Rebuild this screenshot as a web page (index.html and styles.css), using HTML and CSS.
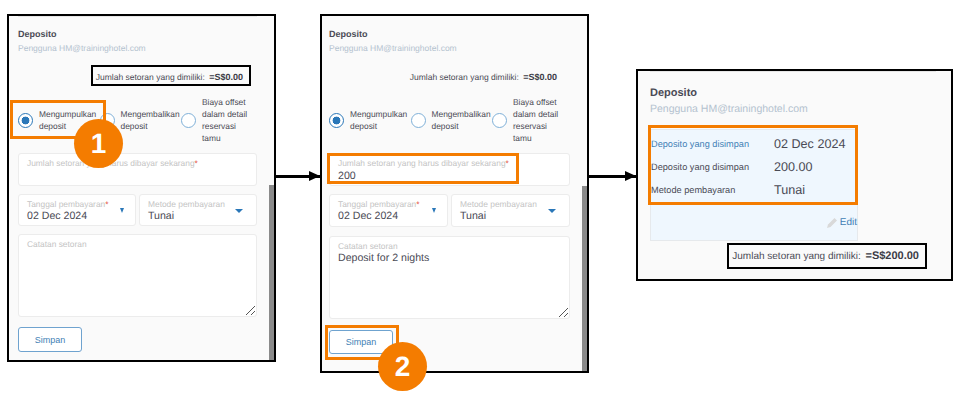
FILE: index.html
```html
<!DOCTYPE html>
<html lang="en">
<head>
    <meta charset="UTF-8">
    <title>Deposito</title>
    <link rel="stylesheet" href="styles.css">
</head>
<body>
    <div class="canvas">

        <!-- Step 1 -->
        <div class="panel panel-one">
            <h2>Deposito</h2>
            <p class="email">Pengguna HM@traininghotel.com</p>
            <p class="balance"><span>Jumlah setoran yang dimiliki:</span> <b>=S$0.00</b></p>

            <div class="radios">
                <div class="radio-item"><i class="radio checked"></i><span>Mengumpulkan deposit</span></div>
                <div class="radio-item"><i class="radio"></i><span>Mengembalikan deposit</span></div>
                <div class="radio-item"><i class="radio"></i><span class="narrow">Biaya offset dalam detail reservasi tamu</span></div>
            </div>

            <div class="field field-amount">
                <label>Jumlah setoran yang harus dibayar sekarang<em>*</em></label>
            </div>
            <div class="field-row">
                <div class="field field-half">
                    <label>Tanggal pembayaran<em>*</em></label>
                    <div class="value">02 Dec 2024</div>
                    <i class="caret caret-small"></i>
                </div>
                <div class="field field-half">
                    <label>Metode pembayaran</label>
                    <div class="value">Tunai</div>
                    <i class="caret"></i>
                </div>
            </div>
            <div class="field field-notes">
                <label>Catatan setoran</label>
                <svg class="grip" width="9" height="9" viewBox="0 0 9 9"><path d="M0 9L9 0M5 9L9 5" stroke="#555" fill="none"/></svg>
            </div>
            <button class="save">Simpan</button>
            <div class="scrollbar"></div>

            <div class="mark-black mark-balance-one"></div>
            <div class="mark-orange mark-radio"></div>
            <div class="badge badge-one">1</div>
        </div>

        <!-- Step 2 -->
        <div class="panel panel-two">
            <h2>Deposito</h2>
            <p class="email">Pengguna HM@traininghotel.com</p>
            <p class="balance"><span>Jumlah setoran yang dimiliki:</span> <b>=S$0.00</b></p>

            <div class="radios">
                <div class="radio-item"><i class="radio checked"></i><span>Mengumpulkan deposit</span></div>
                <div class="radio-item"><i class="radio"></i><span>Mengembalikan deposit</span></div>
                <div class="radio-item"><i class="radio"></i><span class="narrow">Biaya offset dalam detail reservasi tamu</span></div>
            </div>

            <div class="field field-amount">
                <label>Jumlah setoran yang harus dibayar sekarang<em>*</em></label>
                <div class="value">200</div>
            </div>
            <div class="field-row">
                <div class="field field-half">
                    <label>Tanggal pembayaran<em>*</em></label>
                    <div class="value">02 Dec 2024</div>
                    <i class="caret caret-small"></i>
                </div>
                <div class="field field-half">
                    <label>Metode pembayaran</label>
                    <div class="value">Tunai</div>
                    <i class="caret"></i>
                </div>
            </div>
            <div class="field field-notes">
                <label>Catatan setoran</label>
                <div class="value">Deposit for 2 nights</div>
                <svg class="grip" width="9" height="9" viewBox="0 0 9 9"><path d="M0 9L9 0M5 9L9 5" stroke="#555" fill="none"/></svg>
            </div>
            <button class="save">Simpan</button>
            <div class="scrollbar"></div>

            <div class="mark-orange mark-amount"></div>
            <div class="mark-orange mark-save"></div>
            <div class="badge badge-two">2</div>
        </div>

        <!-- Result -->
        <div class="panel panel-three">
            <h2>Deposito</h2>
            <p class="email">Pengguna HM@traininghotel.com</p>
            <div class="summary">
                <div class="summary-row"><span class="blue">Deposito yang disimpan</span><strong>02 Dec 2024</strong></div>
                <div class="summary-row"><span>Deposito yang disimpan</span><strong>200.00</strong></div>
                <div class="summary-row"><span>Metode pembayaran</span><strong>Tunai</strong></div>
                <div class="edit">
                    <svg width="11" height="11" viewBox="0 0 11 11"><path d="M0 11L1 7.5L7.5 1L10 3.5L3.5 10Z" fill="#d9d9d9"/></svg>
                    <span>Edit</span>
                </div>
            </div>
            <p class="balance"><span>Jumlah setoran yang dimiliki:</span> <b>=S$200.00</b></p>

            <div class="mark-orange mark-summary"></div>
            <div class="mark-black mark-balance-three"></div>
        </div>

        <!-- Arrows between the steps -->
        <div class="arrow arrow-one"><i></i></div>
        <div class="arrow arrow-two"><i></i></div>
    </div>
</body>
</html>
```

FILE: styles.css
```css
body {
    margin: 0;
    background-color: #fff;
    font-family: "Liberation Sans", Arial, sans-serif;
    color: #4a4a55;
    text-rendering: geometricPrecision;
}

.canvas {
    position: relative;
    width: 960px;
    height: 405px;
    overflow: hidden;
}

.panel {
    position: absolute;
    box-sizing: border-box;
    border: 2px solid #000;
    background-color: #fafafa;
}

.panel-one {
    left: 7px;
    top: 14px;
    width: 269px;
    height: 348px;
    padding: 12px 17px 0 9px;
}

.panel-two {
    left: 320px;
    top: 14px;
    width: 269px;
    height: 359px;
    padding: 12px 17px 0 7px;
}

.panel-three {
    left: 636px;
    top: 69px;
    width: 317px;
    height: 212px;
    padding: 15px 0 0 12px;
}

/* faint line left over at the top of the cropped panels */
.panel-one::before,
.panel-three::before {
    content: "";
    position: absolute;
    top: 0;
    height: 1px;
    background-color: #e6e6e6;
}

.panel-one::before { left: 9px; width: 239px; }
.panel-three::before { left: 12px; width: 286px; }

h2 {
    margin: 0;
    font-size: 9px;
    line-height: 12px;
    font-weight: bold;
}

.email {
    margin: 2px 0 0;
    font-size: 8.5px;
    line-height: 12px;
    color: #b4c2cf;
}

.balance {
    margin: 16px 13px 0 0;
    font-size: 8.5px;
    line-height: 14px;
    text-align: right;
}

.panel-one .balance {
    margin-right: 14px;
}

.balance b {
    margin-left: 2px;
    font-size: 9px;
    color: #3c3c46;
}

.radios {
    display: flex;
    align-items: center;
    margin-top: 12px;
    height: 48px;
}

.radio-item {
    display: flex;
    align-items: center;
    flex: 0 0 81.5px;
    font-size: 8.4px;
    line-height: 12px;
}

.radio-item span {
    width: 60px;
    margin-left: 6px;
}

.radio-item .narrow {
    width: 50px;
}

.radio {
    flex: none;
    box-sizing: border-box;
    width: 15px;
    height: 15px;
    border: 1.5px solid #7fb0d8;
    border-radius: 50%;
    background-color: #fff;
}

.radio.checked {
    border-color: #2a77b8;
    background: radial-gradient(circle, #2a77b8 0 3.6px, #fff 4.2px);
}

.field {
    position: relative;
    box-sizing: border-box;
    border: 1px solid #ececec;
    border-radius: 3px;
    background-color: #fff;
    padding: 4px 8px 0;
}

.field label {
    display: block;
    font-size: 8.4px;
    line-height: 10px;
    color: #c4c4c4;
}

.field em {
    font-style: normal;
    color: #e5533d;
}

.value {
    font-size: 10.6px;
    line-height: 15px;
    color: #4a4a55;
}

.field-amount {
    margin-top: 9px;
    height: 33px;
}

.field-amount .value {
    margin-top: 1px;
}

.field-row {
    display: flex;
    gap: 3px;
    margin-top: 8px;
}

.field-half {
    flex: 1;
    height: 32px;
}

.panel-two .field-half {
    height: 33px;
}

.field-notes {
    margin-top: 8px;
    height: 83px;
}

.panel-two .field-notes {
    margin-top: 9px;
}

.caret {
    position: absolute;
    right: 13px;
    top: 14px;
    width: 0;
    height: 0;
    border-left: 4px solid transparent;
    border-right: 4px solid transparent;
    border-top: 4px solid #2a77b8;
}

.caret-small {
    right: 11px;
    top: 13px;
    border-left-width: 2.5px;
    border-right-width: 2.5px;
    border-top-width: 5px;
}

.grip {
    position: absolute;
    right: 1px;
    bottom: 1px;
}

.save {
    display: block;
    width: 64px;
    height: 25px;
    margin-top: 10px;
    border: 1px solid #6fa3cf;
    border-radius: 3px;
    background-color: #fff;
    font-family: inherit;
    font-size: 9px;
    color: #3f7fb5;
}

.panel-two .save {
    margin-top: 11px;
    height: 24px;
}

.scrollbar {
    position: absolute;
    right: 0;
    bottom: 0;
    width: 5px;
    height: 175px;
    background-color: #8a8a8a;
}

.panel-two .scrollbar {
    height: 185px;
}

.summary {
    width: 208px;
    height: 112px;
    margin-top: 13px;
    border: 1px solid #e6e9ec;
    box-sizing: border-box;
    background-color: #eff7fe;
    padding-top: 2px;
}

.summary-row {
    display: flex;
    align-items: center;
    height: 23.3px;
}

.summary-row span {
    width: 123px;
    font-size: 9.2px;
}

.summary-row .blue {
    color: #3f7fb5;
}

.summary-row strong {
    font-size: 12.6px;
    font-weight: normal;
}

.edit {
    display: flex;
    justify-content: flex-end;
    align-items: center;
    gap: 2px;
    margin-top: 15px;
    font-size: 10px;
    color: #3f7fb5;
}

.panel-three h2 {
    font-size: 11px;
    line-height: 14px;
}

.panel-three .email {
    font-size: 10.5px;
    line-height: 14px;
    margin-top: 2px;
}

.panel-three .balance {
    margin: 8px 32px 0 0;
    font-size: 10px;
}

.panel-three .balance b {
    font-size: 11px;
}

/* Annotations over the panels */
.mark-black,
.mark-orange {
    position: absolute;
    box-sizing: border-box;
}

.mark-black {
    border: 2px solid #000;
}

.mark-orange {
    border: 3px solid #f47c00;
}

.mark-balance-one { left: 82px; top: 49px; width: 160px; height: 21px; }
.mark-radio { left: 1px; top: 84px; width: 96px; height: 39px; }
.mark-amount { left: 5px; top: 137px; width: 192px; height: 31px; }
.mark-save { left: 3px; top: 309px; width: 74px; height: 35px; }
.mark-summary { left: 10px; top: 54px; width: 210px; height: 80px; }
.mark-balance-three { left: 89px; top: 172px; width: 200px; height: 26px; }

.badge {
    position: absolute;
    width: 49px;
    height: 49px;
    border-radius: 50%;
    background-color: #f47c00;
    color: #fff;
    font-size: 28px;
    font-weight: bold;
    line-height: 49px;
    text-align: center;
}

.badge-one { left: 65px; top: 103px; }
.badge-two { left: 56px; top: 326px; }

.arrow {
    position: absolute;
    display: flex;
    align-items: center;
    height: 3px;
    background-color: #000;
}

.arrow i {
    position: absolute;
    right: 0;
    top: -4px;
    width: 0;
    height: 0;
    border-top: 5.5px solid transparent;
    border-bottom: 5.5px solid transparent;
    border-left: 11px solid #000;
}

.arrow-one { left: 276px; top: 175px; width: 44px; }
.arrow-two { left: 589px; top: 175px; width: 47px; }
```
